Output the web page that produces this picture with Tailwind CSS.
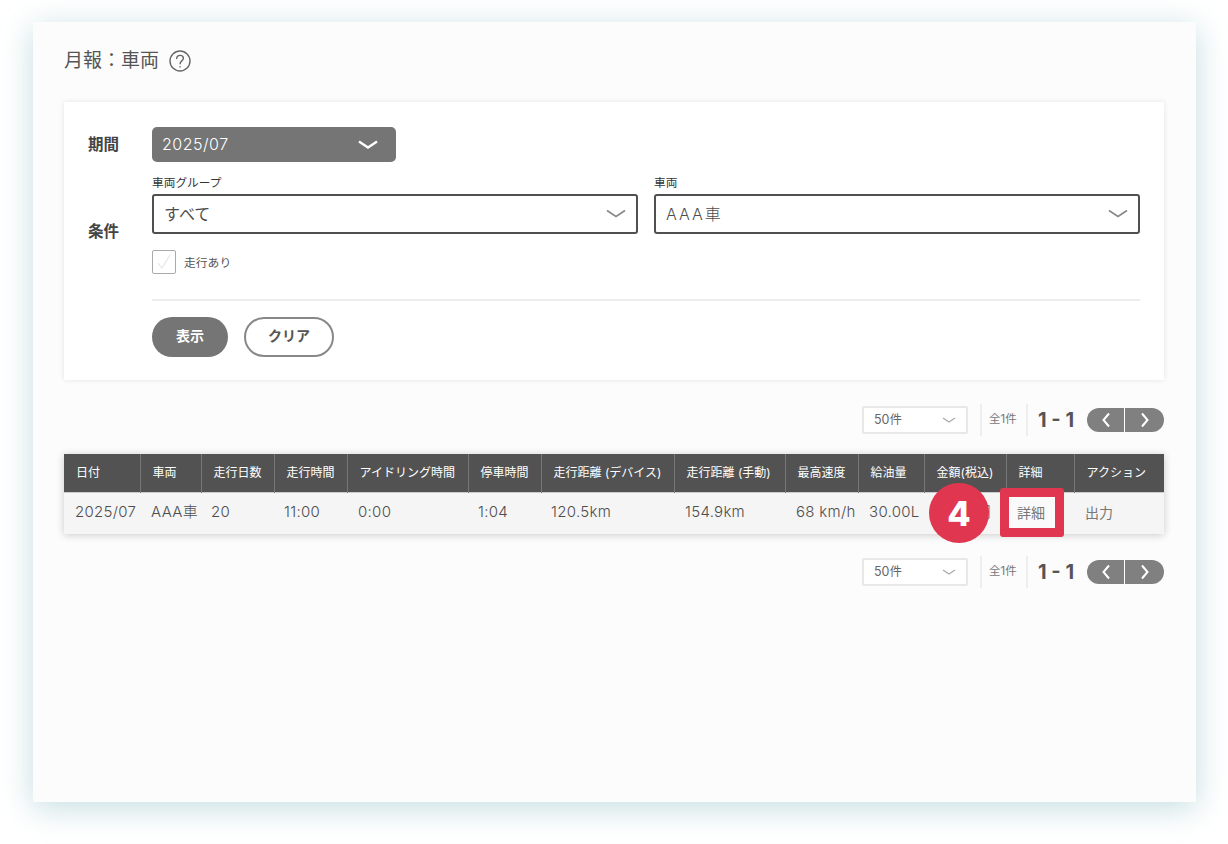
<!DOCTYPE html>
<html lang="ja">
<head>
    <meta charset="UTF-8">
    <meta name="viewport" content="width=device-width, initial-scale=1.0">
    <title>月報：車両</title>
    <script src="https://cdn.jsdelivr.net/npm/@tailwindcss/browser@4"></script>
</head>
<body class="bg-white font-['Inter','Noto_Sans_CJK_JP',sans-serif] text-[#4d4d4d] overflow-hidden">
    <div class="h-[844px] pt-[22px] pl-[33px]">
        <!-- Panel -->
        <main class="w-[1163px] h-[780px] bg-[#fcfcfc] px-[31px] pt-[25px] shadow-[0_6px_30px_rgba(110,170,180,0.4)]">
            <div class="flex items-center gap-[10px] h-[28px] text-[19px] text-[#555]">
                <h1 class="pt-[1px]">月報：車両</h1>
                <svg class="w-[22px] h-[22px]" viewBox="0 0 22 22" fill="none" stroke="#666" stroke-width="1.4" stroke-linecap="round">
                    <circle cx="11" cy="11" r="10"/>
                    <path d="M7.7 8.6c0-2 1.5-3.2 3.4-3.2s3.3 1.2 3.3 2.9c0 2.6-3.3 2.6-3.3 5.4"/>
                    <path d="M11.1 16.6v.3"/>
                </svg>
            </div>

            <!-- Search form -->
            <section class="mt-[27px] h-[278px] w-[1100px] bg-white shadow-[0_0_5px_rgba(0,0,0,0.1)] pl-[24px] pr-[24px] pt-[25px]">
                <div class="flex">
                    <div class="w-[64px] h-[35px] flex items-center text-[15.5px] font-bold text-[#444]">期間</div>
                    <div class="w-[244px] h-[35px] rounded-[5px] bg-[#757575] text-white flex items-center justify-between pl-[10px] pr-[18px] text-[16px] font-light tracking-[0.5px]">
                        <span class="-mt-[2px]">2025/07</span>
                        <svg class="w-[20px] h-[10px]" viewBox="0 0 20 10" fill="none" stroke="#fff" stroke-width="2.4"><path d="M1 1.5l9 6 9-6"/></svg>
                    </div>
                </div>

                <div class="flex">
                    <div class="w-[64px] h-[74px] flex items-end text-[15.5px] font-bold text-[#444] leading-[8px]">条件</div>
                    <div class="flex-1">
                        <div class="flex gap-[16px] mt-[13px]">
                            <div class="w-[486px]">
                                <label class="block text-[11.7px] leading-[16px] text-[#333] mb-[3px]">車両グループ</label>
                                <div class="h-[40px] rounded-[3px] border-2 border-[#505050] bg-white flex items-center justify-between pl-[10px] pr-[10px] text-[16px]">
                                    <span>すべて</span>
                                    <svg class="w-[20px] h-[10px]" viewBox="0 0 20 10" fill="none" stroke="#888" stroke-width="1.6"><path d="M1 1.5l9 6 9-6"/></svg>
                                </div>
                            </div>
                            <div class="w-[486px]">
                                <label class="block text-[11.7px] leading-[16px] text-[#333] mb-[3px]">車両</label>
                                <div class="h-[40px] rounded-[3px] border-2 border-[#505050] bg-white flex items-center justify-between pl-[10px] pr-[10px] text-[16px] font-light tracking-[2px]">
                                    <span>AAA車</span>
                                    <svg class="w-[20px] h-[10px]" viewBox="0 0 20 10" fill="none" stroke="#888" stroke-width="1.6"><path d="M1 1.5l9 6 9-6"/></svg>
                                </div>
                            </div>
                        </div>
                        <div class="flex items-center gap-[8px] mt-[16px]">
                            <span class="w-[24px] h-[24px] rounded-[2px] border border-[#aaa] bg-white flex items-center justify-center">
                                <svg class="w-[16px] h-[16px]" viewBox="0 0 16 16" fill="none" stroke="#e6e6e6" stroke-width="1.2"><path d="M2 9l4 5 8-13"/></svg>
                            </span>
                            <span class="text-[11.8px] text-[#555] pt-[3px]">走行あり</span>
                        </div>
                        <div class="mt-[25px] h-[2px] bg-[#ededed]"></div>
                        <div class="flex gap-[16px] mt-[16px]">
                            <button class="w-[76px] h-[40px] pb-[4px] rounded-full bg-[#757575] text-white text-[14px] font-bold">表示</button>
                            <button class="w-[90px] h-[40px] pb-[4px] rounded-full border-2 border-[#888] bg-white text-[#555] text-[14px] font-bold">クリア</button>
                        </div>
                    </div>
                </div>
            </section>

            <!-- Pager top -->
            <div class="mt-[25px] h-[30px] flex items-center justify-end w-[1100px]">
                <div class="w-[106px] h-[28px] bg-white border-2 border-[#e8e8e8] rounded-[2px] flex items-center justify-between pl-[10px] pr-[10px] text-[12.5px] text-[#666]">
                    <span>50件</span>
                    <svg class="w-[14px] h-[7px]" viewBox="0 0 14 7" fill="none" stroke="#aaa" stroke-width="1.2"><path d="M1 1l6 4 6-4"/></svg>
                </div>
                <div class="ml-[12px] h-[32px] border-l-2 border-[#eee] w-[46px] pl-[7px] flex items-center text-[11.5px] text-[#777]">全1件</div>
                <div class="h-[32px] border-l-2 border-[#eee] w-[61px] pl-[10px] flex items-center text-[20px] font-bold text-[#555] whitespace-nowrap">1 - 1</div>
                <div class="w-[77px] h-[24px] rounded-full bg-[#808080] flex overflow-hidden">
                    <span class="w-[38px] flex items-center justify-center border-r border-white">
                        <svg class="w-[10px] h-[16px]" viewBox="0 0 10 16" fill="none" stroke="#fff" stroke-width="2"><path d="M8 1.5L2.5 8 8 14.5"/></svg>
                    </span>
                    <span class="flex-1 flex items-center justify-center">
                        <svg class="w-[10px] h-[16px]" viewBox="0 0 10 16" fill="none" stroke="#fff" stroke-width="2"><path d="M2 1.5L7.5 8 2 14.5"/></svg>
                    </span>
                </div>
            </div>

            <!-- Table -->
            <div class="relative mt-[19px] w-[1100px] shadow-[0_1px_8px_rgba(0,0,0,0.2)]">
                <table class="w-full table-fixed border-collapse">
                    <colgroup>
                        <col class="w-[76px]"><col class="w-[61px]"><col class="w-[73px]"><col class="w-[73px]"><col class="w-[121px]"><col class="w-[73px]"><col class="w-[133px]"><col class="w-[111px]"><col class="w-[73px]"><col class="w-[66px]"><col class="w-[82px]"><col class="w-[68px]"><col class="w-[90px]">
                    </colgroup>
                    <thead>
                        <tr class="h-[38px] bg-[#525252] text-white text-[12px] text-left">
                            <th class="font-normal pl-[12px] border-r border-[#777] whitespace-nowrap">日付</th>
                            <th class="font-normal pl-[12px] border-r border-[#777] whitespace-nowrap">車両</th>
                            <th class="font-normal pl-[12px] border-r border-[#777] whitespace-nowrap">走行日数</th>
                            <th class="font-normal pl-[12px] border-r border-[#777] whitespace-nowrap">走行時間</th>
                            <th class="font-normal pl-[12px] border-r border-[#777] whitespace-nowrap">アイドリング時間</th>
                            <th class="font-normal pl-[12px] border-r border-[#777] whitespace-nowrap">停車時間</th>
                            <th class="font-normal pl-[12px] border-r border-[#777] whitespace-nowrap">走行距離 (デバイス)</th>
                            <th class="font-normal pl-[12px] border-r border-[#777] whitespace-nowrap">走行距離 (手動)</th>
                            <th class="font-normal pl-[12px] border-r border-[#777] whitespace-nowrap">最高速度</th>
                            <th class="font-normal pl-[12px] border-r border-[#777] whitespace-nowrap">給油量</th>
                            <th class="font-normal pl-[12px] border-r border-[#777] whitespace-nowrap">金額(税込)</th>
                            <th class="font-normal pl-[12px] border-r border-[#777] whitespace-nowrap">詳細</th>
                            <th class="font-normal pl-[12px] whitespace-nowrap">アクション</th>
                        </tr>
                    </thead>
                    <tbody>
                        <tr class="h-[42px] bg-[#f5f5f5] border-t border-[#ccc] text-[15px] font-light tracking-[0.3px] text-[#4d4d4d] text-left">
                            <td class="pl-[11px] pb-[2px] whitespace-nowrap">2025/07</td>
                            <td class="pl-[11px] pb-[2px] whitespace-nowrap">AAA車</td>
                            <td class="pl-[10px] pb-[2px] whitespace-nowrap">20</td>
                            <td class="pl-[10px] pb-[2px] whitespace-nowrap">11:00</td>
                            <td class="pl-[11px] pb-[2px] whitespace-nowrap">0:00</td>
                            <td class="pl-[10px] pb-[2px] whitespace-nowrap">1:04</td>
                            <td class="pl-[10px] pb-[2px] whitespace-nowrap">120.5km</td>
                            <td class="pl-[11px] pb-[2px] whitespace-nowrap">154.9km</td>
                            <td class="pl-[11px] pb-[2px] whitespace-nowrap">68 km/h</td>
                            <td class="pl-[11px] pb-[2px] whitespace-nowrap">30.00L</td>
                            <td class="pr-[15px] pb-[2px] text-right whitespace-nowrap">3,000円</td>
                            <td></td>
                            <td class="pl-[11px] pb-[2px] text-[14px] font-normal tracking-normal text-[#777] whitespace-nowrap">出力</td>
                        </tr>
                    </tbody>
                </table>
                <!-- Step callout -->
                <div class="absolute left-[865px] top-[29px] w-[60px] h-[60px] rounded-full bg-[#e0364f] text-white flex items-center justify-center text-[34px] font-extrabold">4</div>
                <div class="absolute left-[936px] top-[34px] w-[64px] h-[49px] rounded-[3px] border-[9px] border-[#e0364f] bg-[#fafafa] flex items-center justify-center pr-[2px] pb-[1px] text-[14px] text-[#777]">詳細</div>
            </div>

            <!-- Pager bottom -->
            <div class="mt-[23px] h-[30px] flex items-center justify-end w-[1100px]">
                <div class="w-[106px] h-[28px] bg-white border-2 border-[#e8e8e8] rounded-[2px] flex items-center justify-between pl-[10px] pr-[10px] text-[12.5px] text-[#666]">
                    <span>50件</span>
                    <svg class="w-[14px] h-[7px]" viewBox="0 0 14 7" fill="none" stroke="#aaa" stroke-width="1.2"><path d="M1 1l6 4 6-4"/></svg>
                </div>
                <div class="ml-[12px] h-[32px] border-l-2 border-[#eee] w-[46px] pl-[7px] flex items-center text-[11.5px] text-[#777]">全1件</div>
                <div class="h-[32px] border-l-2 border-[#eee] w-[61px] pl-[10px] flex items-center text-[20px] font-bold text-[#555] whitespace-nowrap">1 - 1</div>
                <div class="w-[77px] h-[24px] rounded-full bg-[#808080] flex overflow-hidden">
                    <span class="w-[38px] flex items-center justify-center border-r border-white">
                        <svg class="w-[10px] h-[16px]" viewBox="0 0 10 16" fill="none" stroke="#fff" stroke-width="2"><path d="M8 1.5L2.5 8 8 14.5"/></svg>
                    </span>
                    <span class="flex-1 flex items-center justify-center">
                        <svg class="w-[10px] h-[16px]" viewBox="0 0 10 16" fill="none" stroke="#fff" stroke-width="2"><path d="M2 1.5L7.5 8 2 14.5"/></svg>
                    </span>
                </div>
            </div>
        </main>
    </div>
</body>
</html>
